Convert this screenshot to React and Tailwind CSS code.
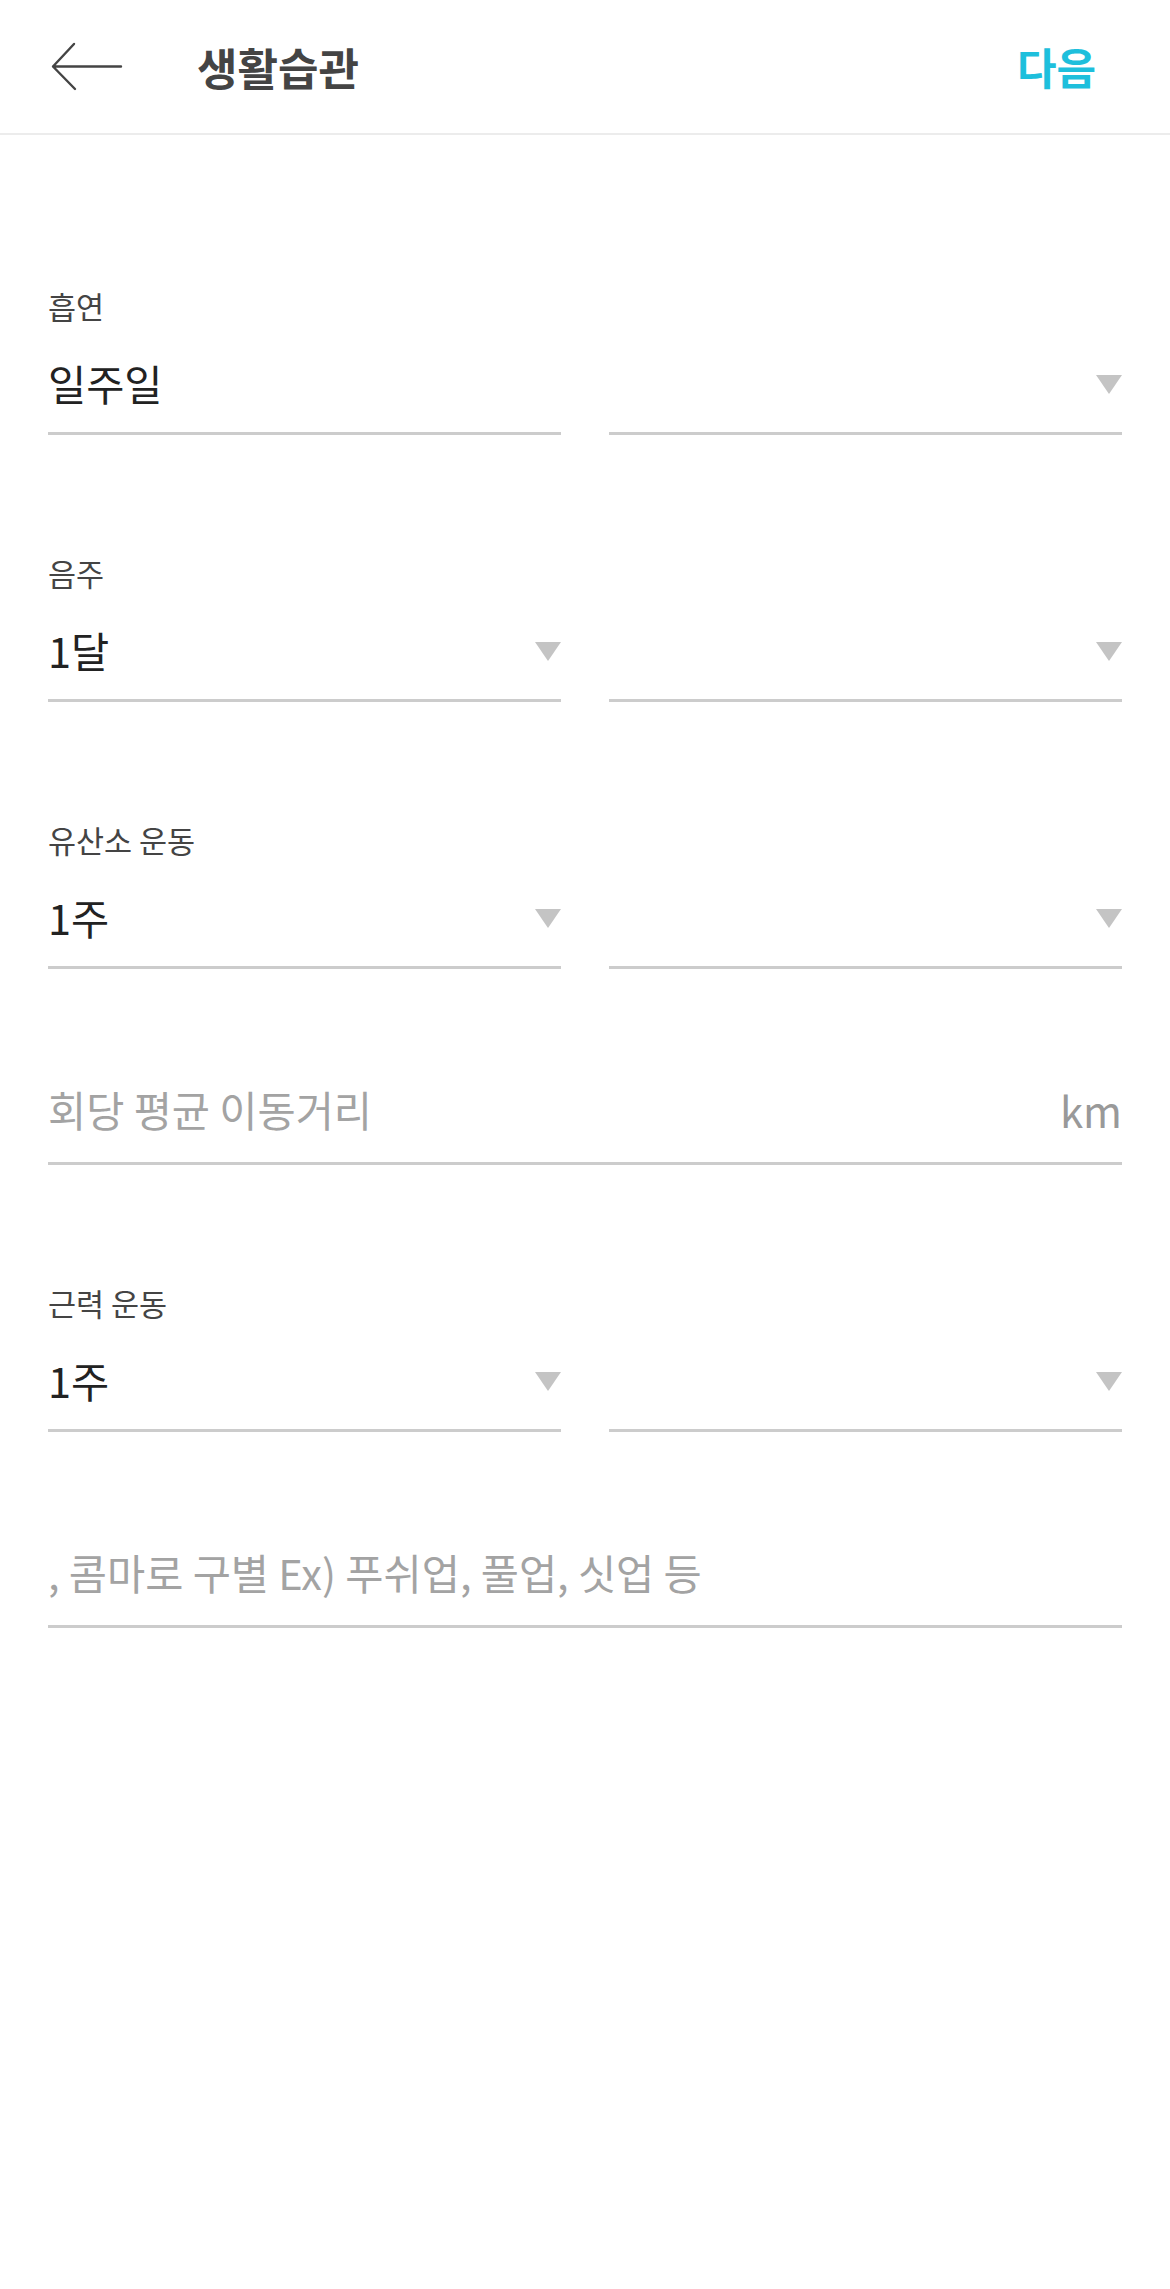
import React from 'react';

const font = { fontFamily: '"Noto Sans CJK KR", "Noto Sans", sans-serif' };

const Caret = () => (
  <svg width="26" height="19" viewBox="0 0 26 19" className="shrink-0">
    <polygon points="0,0 26,0 13,19" fill="#c4c4c4" />
  </svg>
);

const SelectHalf = ({ value, caret = true }) => (
  <div className="flex-1 flex flex-col">
    <div className="h-[56px] flex items-center justify-between">
      <span className="text-[41.5px] leading-none text-[#222]">{value}</span>
      {caret && <Caret />}
    </div>
    <div className="mt-[20px] h-[3px] bg-[#cccccc]" />
  </div>
);

const SelectField = ({ label, value, leftCaret = true }) => (
  <div className="flex flex-col">
    <div className="h-[40px] flex items-center text-[30.5px] text-[#444]">{label}</div>
    <div className="mt-[29px] flex gap-[48px]">
      <SelectHalf value={value} caret={leftCaret} />
      <SelectHalf value="" />
    </div>
  </div>
);

const TextField = ({ placeholder, unit }) => (
  <div className="flex flex-col">
    <div className="h-[56px] flex items-center justify-between">
      <span className="text-[41.5px] leading-none text-[#a3a3a3]">{placeholder}</span>
      {unit && <span className="text-[42px] leading-none text-[#999]">{unit}</span>}
    </div>
    <div className="mt-[24px] h-[3px] bg-[#cccccc]" />
  </div>
);

export default function App() {
  return (
    <div className="min-h-[2289px] w-full bg-white" style={font}>
      {/* Header */}
      <div className="h-[135px] flex items-center border-b-2 border-[#ececec] pl-[51px] pr-[74px]">
        <svg width="72" height="50" viewBox="51 41 72 50" className="shrink-0">
          <path d="M74 43 L53 65.5 L75 88 M53 65.5 H121" fill="none" stroke="#444" strokeWidth="2.4" strokeLinecap="round" strokeLinejoin="round" />
        </svg>
        <h1 className="ml-[74px] text-[44px] font-bold text-[#444] leading-none">생활습관</h1>
        <button className="ml-auto text-[43px] font-bold text-[#1ebfdc] leading-none">다음</button>
      </div>

      {/* Form */}
      <div className="px-[48px] pt-[152px] flex flex-col">
        <SelectField label="흡연" value="일주일" leftCaret={false} />
        <div className="mt-[119px]">
          <SelectField label="음주" value="1달" />
        </div>
        <div className="mt-[119px]">
          <SelectField label="유산소 운동" value="1주" />
        </div>
        <div className="mt-[113px]">
          <TextField placeholder="회당 평균 이동거리" unit="km" />
        </div>
        <div className="mt-[119px]">
          <SelectField label="근력 운동" value="1주" />
        </div>
        <div className="mt-[113px]">
          <TextField placeholder=", 콤마로 구별 Ex) 푸쉬업, 풀업, 싯업 등" />
        </div>
      </div>
    </div>
  );
}
